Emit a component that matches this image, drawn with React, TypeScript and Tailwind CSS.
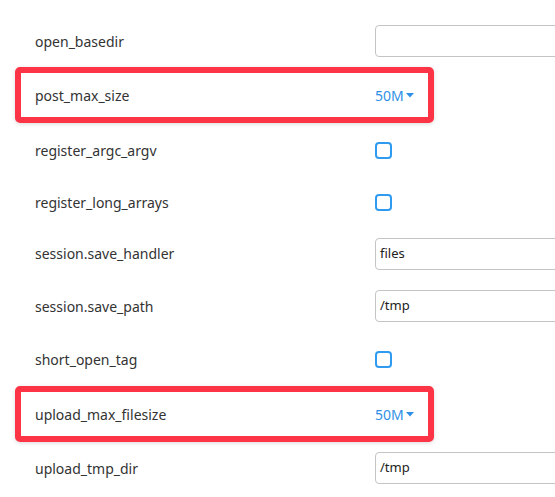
import { ReactNode } from "react"

type Row =
  | { name: string; kind: "text"; value: string; h: string }
  | { name: string; kind: "check"; h: string }
  | { name: string; kind: "select"; value: string; h: string }

const ROWS: Row[] = [
  { name: "open_basedir", kind: "text", value: "", h: "h-[52px]" },
  { name: "post_max_size", kind: "select", value: "50M", h: "h-[56px]" },
  { name: "register_argc_argv", kind: "check", h: "h-[54px]" },
  { name: "register_long_arrays", kind: "check", h: "h-[51px]" },
  { name: "session.save_handler", kind: "text", value: "files", h: "h-[51px]" },
  { name: "session.save_path", kind: "text", value: "/tmp", h: "h-[54px]" },
  { name: "short_open_tag", kind: "check", h: "h-[53px]" },
  { name: "upload_max_filesize", kind: "select", value: "50M", h: "h-[56px]" },
  { name: "upload_tmp_dir", kind: "text", value: "/tmp", h: "h-[52px]" },
]

function Control({ row }: { row: Row }): ReactNode {
  if (row.kind === "check") {
    return <span className="block h-[17px] w-[17px] rounded-[4px] border-2 border-[#2f9bf0] bg-white" />
  }
  if (row.kind === "select") {
    return (
      <span className="inline-flex items-center gap-[2px] text-[14px] text-[#2f8fe6]">
        {row.value}
        <svg width="8" height="5" viewBox="0 0 8 5" className="mt-[1px]">
          <path d="M0 0h8L4 4.5z" fill="#2f8fe6" />
        </svg>
      </span>
    )
  }
  return (
    <div className="flex h-[32px] w-[220px] shrink-0 items-center rounded-[4px] border border-[#c4c4c4] bg-white pl-[4px] text-[13px] text-[#222]">
      {row.value}
    </div>
  )
}

export default function App() {
  return (
    <div
      className="w-[555px] h-[497px] overflow-hidden bg-white pt-[15px]"
      style={{ fontFamily: '"Noto Sans", "Open Sans", sans-serif' }}
    >
      {ROWS.map((row) =>
        row.kind === "select" ? (
          <div
            key={row.name}
            className={`ml-[15px] flex w-[419px] items-center rounded-[5px] border-[6px] border-[#fc3446] pl-[14px] shadow-[0_1px_4px_rgba(0,0,0,0.15)] ${row.h}`}
          >
            <span className="w-[340px] shrink-0 text-[14px] text-[#333]">{row.name}</span>
            <Control row={row} />
          </div>
        ) : (
          <div key={row.name} className={`flex items-center pl-[35px] ${row.h}`}>
            <span className="w-[340px] shrink-0 text-[14px] text-[#333]">{row.name}</span>
            <Control row={row} />
          </div>
        )
      )}
    </div>
  )
}
